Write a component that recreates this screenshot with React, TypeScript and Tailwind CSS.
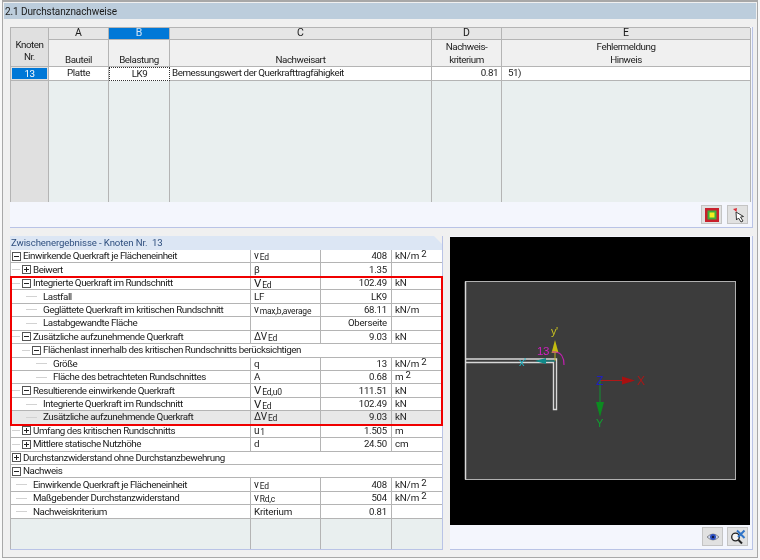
import React from "react";

const line = "border-[#b4b4b4]";

type RowT = { k: string; t: string; sym?: React.ReactNode; v?: string; u?: React.ReactNode; hl?: boolean };

const Sub = ({ a, b, big }: { a: string; b: string; big?: boolean }) => (
  <span className="whitespace-nowrap">
    <span className={big ? "text-[11.5px]" : "text-[10px]"}>{a}</span>
    <span className="text-[8.5px] ml-[1px] relative top-[1px]">{b}</span>
  </span>
);
const M2 = ({ p }: { p: string }) => (
  <span className="whitespace-nowrap">
    {p}
    <span className="text-[9.5px] ml-[2px] relative top-[-2px]">2</span>
  </span>
);

const Box = ({ open }: { open: boolean }) => (
  <svg width="9" height="9" viewBox="0 0 9 9" className="shrink-0">
    <rect x="0.5" y="0.5" width="8" height="8" fill="#fff" stroke="#555" />
    <path d={open ? "M2 4.5H7" : "M2 4.5H7M4.5 2V7"} stroke="#222" />
  </svg>
);

const Conn = ({ w }: { w: number }) => (
  <svg width={w} height="13" viewBox={`0 0 ${w} 13`} className="shrink-0">
    <path d={`M0 6.5H${w}`} stroke="#d2d2d2" fill="none" />
  </svg>
);

const prefix: Record<string, React.ReactNode> = {
  o0: <div className="flex items-center pl-[1px]"><Box open /></div>,
  c0: <div className="flex items-center pl-[1px]"><Box open={false} /></div>,
  o1: <div className="flex items-center pl-[1px] gap-[2px]"><Conn w={8} /><Box open /></div>,
  c1: <div className="flex items-center pl-[1px] gap-[2px]"><Conn w={8} /><Box open={false} /></div>,
  o2: <div className="flex items-center pl-[11px] gap-[2px]"><Conn w={8} /><Box open /></div>,
  l1: <div className="flex items-center pl-[5px] pr-[6px]"><Conn w={11} /></div>,
  l2: <div className="flex items-center pl-[15px] pr-[6px]"><Conn w={11} /></div>,
  l3: <div className="flex items-center pl-[25px] pr-[6px]"><Conn w={11} /></div>,
};

const rows: RowT[] = [
  { k: "o0", t: "Einwirkende Querkraft je Flächeneinheit", sym: <Sub a="v" b="Ed" />, v: "408", u: <M2 p="kN/m" /> },
  { k: "c1", t: "Beiwert", sym: "β", v: "1.35" },
  { k: "o1", t: "Integrierte Querkraft im Rundschnitt", sym: <Sub a="V" b="Ed" big />, v: "102.49", u: "kN" },
  { k: "l2", t: "Lastfall", sym: "LF", v: "LK9" },
  { k: "l2", t: "Geglättete Querkraft im kritischen Rundschnitt", sym: <Sub a="v" b="max,b,average" />, v: "68.11", u: "kN/m" },
  { k: "l2", t: "Lastabgewandte Fläche", v: "Oberseite" },
  { k: "o1", t: "Zusätzliche aufzunehmende Querkraft", sym: <Sub a="ΔV" b="Ed" />, v: "9.03", u: "kN" },
  { k: "o2", t: "Flächenlast innerhalb des kritischen Rundschnitts berücksichtigen" },
  { k: "l3", t: "Größe", sym: "q", v: "13", u: <M2 p="kN/m" /> },
  { k: "l3", t: "Fläche des betrachteten Rundschnittes", sym: "A", v: "0.68", u: <M2 p="m" /> },
  { k: "o1", t: "Resultierende einwirkende Querkraft", sym: <Sub a="V" b="Ed,u0" big />, v: "111.51", u: "kN" },
  { k: "l2", t: "Integrierte Querkraft im Rundschnitt", sym: <Sub a="V" b="Ed" big />, v: "102.49", u: "kN" },
  { k: "l2", t: "Zusätzliche aufzunehmende Querkraft", sym: <Sub a="ΔV" b="Ed" />, v: "9.03", u: "kN", hl: true },
  { k: "c1", t: "Umfang des kritischen Rundschnitts", sym: <Sub a="u" b="1" />, v: "1.505", u: "m" },
  { k: "c1", t: "Mittlere statische Nutzhöhe", sym: "d", v: "24.50", u: "cm" },
  { k: "c0", t: "Durchstanzwiderstand ohne Durchstanzbewehrung" },
  { k: "o0", t: "Nachweis" },
  { k: "l1", t: "Einwirkende Querkraft je Flächeneinheit", sym: <Sub a="v" b="Ed" />, v: "408", u: <M2 p="kN/m" /> },
  { k: "l1", t: "Maßgebender Durchstanzwiderstand", sym: <Sub a="v" b="Rd,c" />, v: "504", u: <M2 p="kN/m" /> },
  { k: "l1", t: "Nachweiskriterium", sym: "Kriterium", v: "0.81" },
];

const Btn = ({ children }: { children: React.ReactNode }) => (
  <div className="w-[21px] h-[19px] bg-[#e1e1e1] border border-[#c4c4c4] flex items-center justify-center">{children}</div>
);

const TopCell = ({ c = "", children }: { c?: string; children?: React.ReactNode }) => (
  <div className={`border-r border-b ${line} flex items-center min-w-0 ${c}`}>{children}</div>
);

const Letter = ({ children, sel }: { children: string; sel?: boolean }) => (
  <div className={`border-r border-b ${line} flex items-center justify-center leading-none text-[10.5px] tracking-normal ${sel ? "bg-[#0078d7] text-[#cfe4f7]" : "bg-[#e6e6e6]"}`}>{children}</div>
);

const Head = ({ a, b }: { a?: string; b: string }) => (
  <div className={`border-r border-b ${line} bg-[#f0f0f0] flex flex-col items-center justify-end text-[#222] leading-[13px]`}>
    <span>{a}</span>
    <span>{b}</span>
  </div>
);

const Scene = () => (
  <svg width="300" height="288" viewBox="450 237 300 288" className="block">
    <rect x="465.5" y="281.5" width="270" height="198" fill="#3c3c3c" stroke="#b0b0b0" />
    <path d="M465.5 281.5V479.5" stroke="#d8d8d8" strokeWidth="1.5" />
    <path d="M466 359H556.5V409.5H553.5V362.5H466" fill="none" stroke="#d8d8d8" strokeWidth="1.4" />
    <path d="M555 361V345" stroke="#b8b020" strokeWidth="1" />
    <path d="M555 340L558.5 353H551.5Z" fill="#c4bc10" />
    <text x="551" y="335" fontSize="11" fill="#c8c020" fontFamily="Liberation Sans">y'</text>
    <path d="M555 361H541" stroke="#19a0a0" strokeWidth="1" />
    <path d="M535 361L546 358V364Z" fill="#0f8a8a" />
    <text x="519" y="366" fontSize="11" fill="#22b8c8" fontFamily="Liberation Sans">x'</text>
    <text x="537" y="355" fontSize="11.5" fill="#d020c0" fontFamily="Liberation Sans">13</text>
    <path d="M552 352H556Q564 353 564 365" fill="none" stroke="#c020b0" strokeWidth="1.2" />
    <path d="M600 380.5H622" stroke="#b01818" strokeWidth="1" />
    <path d="M635 380.5L622 376.5V384.5Z" fill="#a81010" />
    <text x="637" y="385" fontSize="12" fill="#a81818" fontFamily="Liberation Sans">X</text>
    <path d="M600 380V402" stroke="#109030" strokeWidth="1" />
    <path d="M600 417L596 402H604Z" fill="#0c8a20" />
    <text x="596" y="427" fontSize="11" fill="#10a030" fontFamily="Liberation Sans">Y</text>
    <text x="596" y="385" fontSize="12" fill="#2020c0" fontFamily="Liberation Sans">Z</text>
  </svg>
);

export default function App() {
  return (
    <div className="w-[760px] h-[560px] bg-[#f8f8f8] pl-[2px] pr-[2px] pb-[2px] text-[9.8px] tracking-[-0.45px] text-[#1a1a1a] font-['Roboto',Arial,sans-serif] overflow-hidden blur-[0.3px]">
      <div className="h-full border border-t-2 border-[#a8a8a8] bg-[#f0f0f0] flex flex-col">
        <div className="h-[16px] mx-[1px] mt-[1px] bg-[#bccddc] flex items-center pl-[1px] text-[10px] tracking-[-0.1px] text-[#1a1a1a] shrink-0">
          2.1 Durchstanznachweise
        </div>

        <div className="mt-[8px] ml-[7px] mr-[4px] h-[201px] border-b border-r border-[#b9c3e6] bg-[#f4f6fd] flex flex-col shrink-0">
          <div className={`grid grid-cols-[38px_60px_61px_262px_70px_249px] grid-rows-[12px_27px_14px_121px] border-l border-t ${line} w-[740px]`}>
            <div className={`row-span-2 border-r border-b ${line} bg-[#e0e0e0] flex flex-col items-center pt-[11px] leading-[12px]`}>
              <span>Knoten</span>
              <span>Nr.</span>
            </div>
            <Letter>A</Letter>
            <Letter sel>B</Letter>
            <Letter>C</Letter>
            <Letter>D</Letter>
            <Letter>E</Letter>
            <Head b="Bauteil" />
            <Head b="Belastung" />
            <Head b="Nachweisart" />
            <Head a="Nachweis-" b="kriterium" />
            <Head a="Fehlermeldung" b="Hinweis" />
            <div className={`border-r border-b ${line} bg-[#e0e0e0] p-[1px]`}>
              <div className="h-full bg-[#0078d7] text-white flex items-center justify-center leading-none">13</div>
            </div>
            <TopCell c="bg-white justify-center">Platte</TopCell>
            <TopCell c="bg-white justify-center border-dotted !border-[#333] border-l border-t">LK9</TopCell>
            <TopCell c="bg-white pl-[2px]">Bemessungswert der Querkrafttragfähigkeit</TopCell>
            <TopCell c="bg-white justify-end pr-[3px]">0.81</TopCell>
            <TopCell c="bg-white pl-[6px]">51)</TopCell>
            <div className={`border-r ${line} bg-[#e0e0e0]`} />
            <div className={`border-r ${line} bg-[#e9efef]`} />
            <div className={`border-r ${line} bg-[#e9efef]`} />
            <div className={`border-r ${line} bg-[#e9efef]`} />
            <div className={`border-r ${line} bg-[#e9efef]`} />
            <div className={`border-r ${line} bg-[#e9efef]`} />
          </div>
          <div className="flex-1 flex items-center justify-end gap-[5px] pr-[4px]">
            <Btn>
              <svg width="14" height="14" viewBox="0 0 14 14">
                <rect width="14" height="14" fill="#c8202c" />
                <rect x="2.5" y="2.5" width="9" height="9" fill="#3fae3a" />
                <rect x="4.5" y="4.5" width="5" height="5" fill="#f2ee20" />
              </svg>
            </Btn>
            <Btn>
              <svg width="16" height="16" viewBox="0 0 16 16">
                <path d="M3 2L7 1L6.5 5Z" fill="#d8303a" />
                <path d="M6 5L6.5 13L8.5 11L11 15L13 14L10.5 10L13.5 9.5Z" fill="#fff" stroke="#222" strokeWidth="0.9" />
              </svg>
            </Btn>
          </div>
        </div>

        <div className="flex mt-[8px] ml-[7px] mr-[4px] gap-[7px] flex-1 min-h-0 mb-[7px]">
          <div className="w-[433px] flex flex-col border-b border-r border-[#b9c3e6]">
            <div className="h-[14px] bg-[#dce6f4] text-[#2f4f7f] flex items-center pl-[1px] text-[9.6px] tracking-[-0.1px] [clip-path:polygon(0_0,calc(100%-8px)_0,100%_8px,100%_100%,0_100%)] shrink-0">
              Zwischenergebnisse - Knoten Nr.&nbsp; 13
            </div>
            <div className={`relative flex-1 flex flex-col border-l ${line} bg-[#e9efef]`}>
              {rows.map((r, i) => (
                <div key={i} className={`flex h-[13.45px] border-b ${line} ${r.hl ? "bg-[#e8e8e8]" : "bg-white"} leading-[12px]`}>
                  <div className={`flex items-center ${r.sym === undefined && r.v === undefined ? "flex-1" : `w-[240px] border-r ${line}`} overflow-hidden whitespace-nowrap`}>
                    {prefix[r.k]}
                    <span className={r.k[0] === "l" ? "" : "ml-[2px]"}>{r.t}</span>
                  </div>
                  {(r.sym !== undefined || r.v !== undefined) && (
                    <>
                      <div className={`w-[70px] border-r ${line} pl-[3px] flex items-center overflow-hidden tracking-[-0.2px]`}>{r.sym}</div>
                      <div className={`w-[71px] border-r ${line} pr-[4px] flex items-center justify-end text-[9.6px] tracking-[-0.2px]`}>{r.v}</div>
                      <div className="flex-1 pl-[3px] flex items-center tracking-[-0.1px]">{r.u}</div>
                    </>
                  )}
                </div>
              ))}
              <div className="flex-1 flex">
                <div className={`w-[240px] border-r ${line}`} />
                <div className={`w-[70px] border-r ${line}`} />
                <div className={`w-[71px] border-r ${line}`} />
              </div>
              <div className="absolute left-[-1px] right-[-1px] top-[26px] h-[150px] border-2 border-[#f00000] pointer-events-none" />
            </div>
          </div>
          <div className="flex-1 flex flex-col border-b border-r border-[#b9c3e6] bg-[#f4f6fd] pt-[1px]">
            <div className="bg-black w-[300px] h-[288px] shrink-0">
              <Scene />
            </div>
            <div className="flex-1 flex items-start pt-[2px] justify-end gap-[4px] pr-[4px]">
              <Btn>
                <svg width="14" height="12" viewBox="0 0 14 12">
                  <path d="M1 6Q7 0 13 6Q7 12 1 6Z" fill="#cfd8f0" stroke="#555" strokeWidth="0.6" />
                  <circle cx="7" cy="6" r="3" fill="#2c4fc0" />
                  <circle cx="7" cy="6" r="1.2" fill="#101840" />
                </svg>
              </Btn>
              <Btn>
                <svg width="17" height="16" viewBox="0 0 17 16">
                  <circle cx="6.5" cy="8" r="3.8" fill="#f4f4f4" stroke="#222" strokeWidth="1.3" />
                  <path d="M9.5 11L13 14.5" stroke="#222" strokeWidth="2" />
                  <path d="M8 1.5L15.5 9M15.5 1.5L9 8" stroke="#2f74c8" strokeWidth="2" />
                </svg>
              </Btn>
            </div>
          </div>
        </div>
      </div>
    </div>
  );
}
